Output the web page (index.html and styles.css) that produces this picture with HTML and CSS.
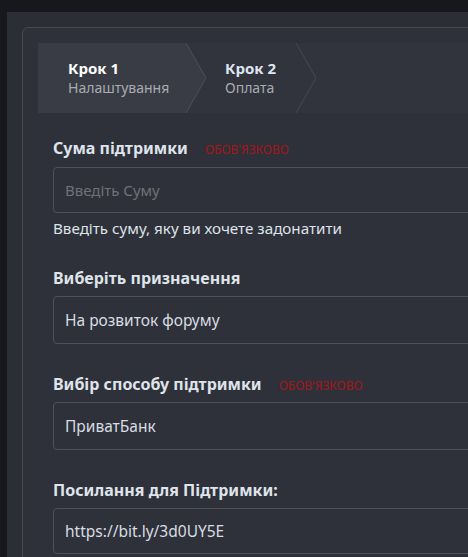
FILE: index.html
```html
<!DOCTYPE html>
<html lang="uk">
<head>
<meta charset="utf-8">
<link rel="stylesheet" href="styles.css">
</head>
<body>
<div class="panel">
  <div class="card">
    <div class="steps">
      <div class="step step-active">
        <div class="step-text step-text-1">
          <div class="step-title">Крок 1</div>
          <div class="step-sub">Налаштування</div>
        </div>
        <svg class="chev" width="20" height="70" viewBox="0 0 20 70">
          <polygon points="0,0 20,35 0,70" fill="#393c45"/>
          <polyline points="0,0 20,35 0,70" fill="none" stroke="#4d505a" stroke-width="1"/>
        </svg>
      </div>
      <div class="step">
        <div class="step-text step-text-2">
          <div class="step-title">Крок 2</div>
          <div class="step-sub">Оплата</div>
        </div>
        <svg class="chev" width="20" height="70" viewBox="0 0 20 70">
          <polyline points="0,0 20,35 0,70" fill="none" stroke="#464953" stroke-width="1"/>
        </svg>
      </div>
    </div>

    <div class="form">
      <div class="field field-first">
        <div class="label-row"><span class="label">Сума підтримки</span><span class="req">Обов'язково</span></div>
        <div class="box placeholder">Введіть Суму</div>
        <div class="help">Введіть суму, яку ви хочете задонатити</div>
      </div>
      <div class="field">
        <div class="label-row"><span class="label">Виберіть призначення</span></div>
        <div class="box box-select">На розвиток форуму</div>
      </div>
      <div class="field">
        <div class="label-row"><span class="label">Вибір способу підтримки</span><span class="req">Обов'язково</span></div>
        <div class="box box-select">ПриватБанк</div>
      </div>
      <div class="field">
        <div class="label-row"><span class="label">Посилання для Підтримки:</span></div>
        <div class="box">https://bit.ly/3d0UY5E</div>
      </div>
    </div>
  </div>
</div>
</body>
</html>
```

FILE: styles.css
```css
html, body {
  margin: 0;
  padding: 0;
  background: #17181b;
  overflow: hidden;
  height: 100%;
}
body {
  font-family: "Noto Sans", "Open Sans", sans-serif;
  color: #dfe3ea;
}
.panel {
  margin: 12px 0 0 7px;
  width: 640px;
  padding: 15px;
  background: #2b2e35;
  min-height: 600px;
}
.card {
  border: 1px solid #464952;
  border-radius: 6px;
  background: #2e3139;
  padding: 15px;
  min-height: 600px;
}
.steps {
  display: flex;
  height: 70px;
  background: #31343c;
}
.step {
  display: flex;
  align-items: stretch;
}
.step-active .step-text {
  background: #393c45;
}
.step-text {
  display: flex;
  flex-direction: column;
  justify-content: center;
}
.step-text-1 {
  width: 118px;
  padding-left: 30px;
}
.step-text-2 {
  width: 71px;
  padding-left: 19px;
}
.chev {
  display: block;
  flex: none;
}
.step-title {
  font-size: 15px;
  font-weight: 700;
  line-height: 20px;
  color: #ffffff;
}
.step:not(.step-active) .step-title { color: #dfe6f2; }
.step-sub {
  font-size: 14px;
  color: #a9acb3;
  line-height: 20px;
}
.form {
  padding-left: 15px;
}
.field {
  display: flex;
  flex-direction: column;
}
.label-row {
  display: flex;
  align-items: baseline;
  gap: 17px;
  height: 20px;
  line-height: 20px;
  margin-top: 30px;
  margin-bottom: 8px;
}
.field-first .label-row {
  margin-top: 25px;
  margin-bottom: 9px;
}
.label {
  font-size: 16px;
  font-weight: 700;
  color: #dfe3ea;
}
.req {
  font-size: 12px;
  color: #a3171b;
  text-transform: uppercase;
}
.box {
  box-sizing: border-box;
  height: 46px;
  border: 1px solid #4e515a;
  border-radius: 4px;
  padding: 0 11px;
  display: flex;
  align-items: center;
  font-size: 15.5px;
  color: #d8dce3;
}
.box-select {
  height: 48px;
}
.placeholder {
  color: #6e7178;
  font-size: 15px;
}
.help {
  font-size: 15.2px;
  color: #dfe3ea;
  margin-top: 5px;
  line-height: 20px;
}
```
